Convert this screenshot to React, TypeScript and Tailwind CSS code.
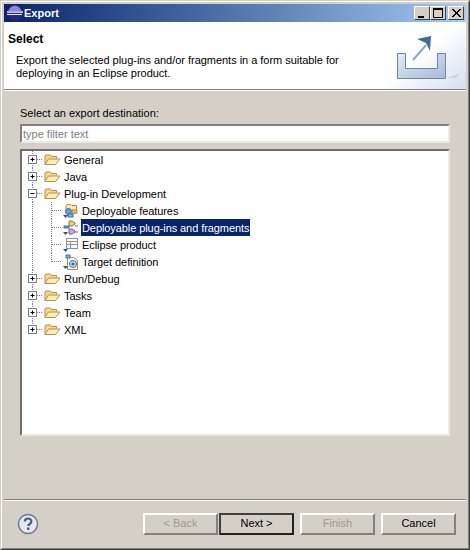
const font = "font-['Liberation_Sans','Noto_Sans',sans-serif]";

function EclipseIcon() {
  return (
    <svg width="16" height="16" viewBox="0 0 16 16" className="shrink-0">
      <circle cx="8" cy="8" r="7.5" fill="#2c2a78" />
      <path d="M1.5 6C2.5 2 6 .8 8 .8c3 0 5.5 2 6.2 5.2z" fill="#8a8ad4" />
      <rect x="0" y="6.4" width="16" height="1.3" fill="#fff" />
      <rect x="0" y="9" width="15" height="1" fill="#e8e8f8" />
    </svg>
  );
}

function WinButton({ kind }: { kind: "min" | "max" | "close" }) {
  return (
    <div className="w-4 h-[14px] bg-[#d4d0c8] border border-t-white border-l-white border-r-[#404040] border-b-[#404040] flex items-center justify-center">
      <svg width="12" height="10" viewBox="0 0 12 10">
        {kind === "min" && <rect x="2" y="8" width="6" height="2" fill="#000" />}
        {kind === "max" && <path d="M1.5 1.5h9v8h-9z" fill="none" stroke="#000" strokeWidth="1" />}
        {kind === "max" && <rect x="1" y="0" width="10" height="2" fill="#000" />}
        {kind === "close" && <path d="M2 1l8 8M3 1l8 8M10 1L2 9M11 1L3 9" stroke="#000" strokeWidth="1" />}
      </svg>
    </div>
  );
}

function Banner() {
  return (
    <svg width="80" height="67" viewBox="0 0 80 67" className="shrink-0">
      <defs>
        <linearGradient id="bg" x1="0" y1="0" x2="1" y2="1">
          <stop offset="0.45" stopColor="#fff" />
          <stop offset="1" stopColor="#d5dfef" />
        </linearGradient>
        <linearGradient id="tray" x1="0" y1="0" x2="1" y2="1">
          <stop offset="0" stopColor="#e4ebf6" />
          <stop offset="1" stopColor="#a4bad8" />
        </linearGradient>
      </defs>
      <rect width="80" height="67" fill="url(#bg)" />
      <path d="M11.5 31.5h8v15h32v-15h8v25h-48z" fill="url(#tray)" stroke="#6a87b0" strokeWidth="1" />
      <path d="M27 38l13-15" stroke="#8ba6cb" strokeWidth="2" fill="none" />
      <path d="M31 17l14-3-1 15-4-8z" fill="#3f6a9e" />
      <path d="M60 56l14-5-4 5z" fill="#c3cbd6" opacity=".6" />
    </svg>
  );
}

function Expander({ open }: { open?: boolean }) {
  return (
    <g>
      <rect x="6.5" y="4.5" width="8" height="8" fill="#fff" stroke="#808080" />
      <path d="M8.5 8.5h4" stroke="#000" />
      {!open && <path d="M10.5 6.5v4" stroke="#000" />}
    </g>
  );
}

function FolderIcon() {
  return (
    <svg width="16" height="16" viewBox="0 0 16 16" className="shrink-0">
      <path d="M1 12.5V4l1-1h4.5l1 1.5h5v2" fill="#f8d890" stroke="#b88e4c" />
      <path d="M1 12.5l3.5-5.5H16l-4.5 5.5z" fill="#fdeebc" stroke="#b88e4c" />
    </svg>
  );
}

function Overlay() {
  return <path d="M0 12h5l-2.5 3z" fill="#24528c" />;
}

function FeatureIcon() {
  return (
    <svg width="16" height="16" viewBox="0 0 16 16" className="shrink-0">
      <path d="M3 6V2.5l1-1h4l1 1h4.5V10H6z" fill="#fbe9b8" stroke="#b08a4a" />
      <circle cx="5.5" cy="8.5" r="3" fill="#6f9ad6" stroke="#3c6aa6" />
      <path d="M9 7h5v3H9z" fill="#e8c860" stroke="#a88a30" />
      <path d="M5 11h5v3H5z" fill="#88aee0" stroke="#3c6aa6" />
      <Overlay />
    </svg>
  );
}

function PluginIcon() {
  return (
    <svg width="16" height="16" viewBox="0 0 16 16" className="shrink-0">
      <path d="M6 1v5h3l3-2V3L9 1z" fill="#e8d070" stroke="#8a7a30" />
      <path d="M1 6h5v2H1z" fill="#7ea4dc" stroke="#3c6aa6" />
      <path d="M6 9v5h3l3-2v-1L9 9z" fill="#c8a6e0" stroke="#7a5aa0" />
      <path d="M12 6h3M12 12h3" stroke="#7a5aa0" />
      <Overlay />
    </svg>
  );
}

function ProductIcon() {
  return (
    <svg width="16" height="16" viewBox="0 0 16 16" className="shrink-0">
      <rect x="3.5" y="1.5" width="11" height="10" fill="#fff" stroke="#7d93ad" />
      <path d="M3.5 4.5h11" stroke="#c98a3a" />
      <path d="M3.5 7.5h11M7.5 4.5v7" stroke="#7d93ad" />
      <Overlay />
    </svg>
  );
}

function TargetIcon() {
  return (
    <svg width="16" height="16" viewBox="0 0 16 16" className="shrink-0">
      <path d="M4.5 3.5h6l4 3v9h-10z" fill="#fff" stroke="#b08a4a" />
      <circle cx="10" cy="10" r="3.5" fill="#cfe0f5" stroke="#3c6aa6" />
      <circle cx="10" cy="10" r="1.6" fill="#2f6ab8" />
      <path d="M3 1h4v3H3z" fill="#88aee0" stroke="#3c6aa6" />
      <Overlay />
    </svg>
  );
}

// the dotted lines and the +/- box of one row, 17px high
function RootRow({ label, open, last }: { label: string; open?: boolean; last?: boolean }) {
  return (
    <div className="h-[17px] flex items-center">
      <svg width="22" height="17" viewBox="0 0 22 17" className="shrink-0">
        <path d={last ? "M10.5 0v4" : "M10.5 0v17"} stroke="#808080" strokeDasharray="1 1" />
        <path d="M15 8.5h6" stroke="#808080" strokeDasharray="1 1" />
        <Expander open={open} />
      </svg>
      <FolderIcon />
      <span className="ml-[4px] h-[17px] pt-[2px] leading-[15px] text-black">{label}</span>
    </div>
  );
}

function ChildRow({ label, icon, last, selected }: { label: string; icon: React.ReactNode; last?: boolean; selected?: boolean }) {
  return (
    <div className="h-[17px] flex items-center">
      <svg width="41" height="17" viewBox="0 0 41 17" className="shrink-0">
        <path d="M10.5 0v17" stroke="#808080" strokeDasharray="1 1" />
        <path d={last ? "M29.5 0v9" : "M29.5 0v17"} stroke="#808080" strokeDasharray="1 1" />
        <path d="M30 8.5h10" stroke="#808080" strokeDasharray="1 1" />
      </svg>
      {icon}
      <span className={"ml-[2px] px-px pt-[2px] leading-[15px] h-[17px] tracking-[-0.08px] " + (selected ? "bg-[#0a246a] text-white" : "text-black")}>{label}</span>
    </div>
  );
}

function Btn({ label, disabled, primary, className }: { label: string; disabled?: boolean; primary?: boolean; className?: string }) {
  const edge = primary
    ? "border-2 border-t-[#404040] border-l-[#404040] border-r-[#202020] border-b-[#202020]"
    : "border-2 border-t-white border-l-white border-r-[#808080] border-b-[#808080]";
  return (
    <div className={"w-[75px] h-[22px] pb-px bg-[#d4d0c8] flex items-center justify-center text-[11px] " + edge + " " + (className ?? "") + " " + (disabled ? "text-[#9a9890]" : "text-black")}>
      {label}
    </div>
  );
}

export default function App() {
  return (
    <div className={"w-[470px] h-[550px] bg-[#d4d0c8] border border-t-[#d4d0c8] border-l-[#d4d0c8] border-r-[#404040] border-b-[#404040] text-[11px] " + font}>
      <div className="h-full border border-t-white border-l-white border-r-[#808080] border-b-[#808080] p-[2px] flex flex-col">
        <div className="h-[18px] shrink-0 flex items-center bg-gradient-to-r from-[#0a246a] to-[#a6caf0] pl-[3px] pr-[2px]">
          <EclipseIcon />
          <span className="ml-[1px] font-bold text-white text-[11px]">Export</span>
          <div className="ml-auto flex">
            <WinButton kind="min" />
            <WinButton kind="max" />
            <div className="ml-[2px]">
              <WinButton kind="close" />
            </div>
          </div>
        </div>

        <div className="h-[67px] shrink-0 bg-white flex justify-between">
          <div className="text-black">
            <div className="pl-[4px] pt-[9px] font-bold text-[12px] leading-[16px]">Select</div>
            <div className="pl-[12px] pt-[7px] leading-[13px] tracking-[-0.03px]">
              Export the selected plug-ins and/or fragments in a form suitable for
              <br />
              deploying in an Eclipse product.
            </div>
          </div>
          <Banner />
        </div>
        <div className="h-[2px] shrink-0 border-t border-t-[#808080] border-b border-b-white" />

        <div className="flex-1 px-[16px] flex flex-col min-h-0">
          <div className="pt-[16px] leading-[13px] text-black">Select an export destination:</div>
          <div className="mt-[4px] h-[19px] bg-white border-2 border-t-[#808080] border-l-[#808080] border-r-[#ece9e2] border-b-[#ece9e2] pl-[1px] leading-[17px] text-[#808080]">
            type filter text
          </div>
          <div className="mt-[6px] h-[287px] bg-white border-2 border-t-[#707070] border-l-[#707070] border-r-[#ece9e2] border-b-[#ece9e2] overflow-hidden">
            <RootRow label="General" />
            <RootRow label="Java" />
            <RootRow label="Plug-in Development" open />
            <ChildRow label="Deployable features" icon={<FeatureIcon />} />
            <ChildRow label="Deployable plug-ins and fragments" icon={<PluginIcon />} selected />
            <ChildRow label="Eclipse product" icon={<ProductIcon />} />
            <ChildRow label="Target definition" icon={<TargetIcon />} last />
            <RootRow label="Run/Debug" />
            <RootRow label="Tasks" />
            <RootRow label="Team" />
            <RootRow label="XML" last />
          </div>
        </div>

        <div className="h-[2px] shrink-0 border-t border-t-[#808080] border-b border-b-white" />
        <div className="h-[45px] shrink-0 flex items-start pt-[12px] pl-[13px] pr-[10px]">
          <svg width="22" height="22" viewBox="0 0 22 22" className="shrink-0">
            <circle cx="11" cy="11" r="9.5" fill="#e4e8f2" stroke="#6d7c96" strokeWidth="1.5" />
            <path d="M7.8 8.5c0-4 6.6-4 6.6 0 0 2.6-3.2 2.4-3.2 4.6" fill="none" stroke="#4d5c78" strokeWidth="2.2" />
            <rect x="10" y="14.5" width="2.4" height="2.4" fill="#4d5c78" />
          </svg>
          <div className="ml-auto flex">
            <Btn label="< Back" disabled />
            <Btn label="Next >" primary className="ml-px" />
            <Btn label="Finish" disabled className="ml-[6px]" />
            <Btn label="Cancel" className="ml-[6px]" />
          </div>
        </div>
      </div>
    </div>
  );
}
